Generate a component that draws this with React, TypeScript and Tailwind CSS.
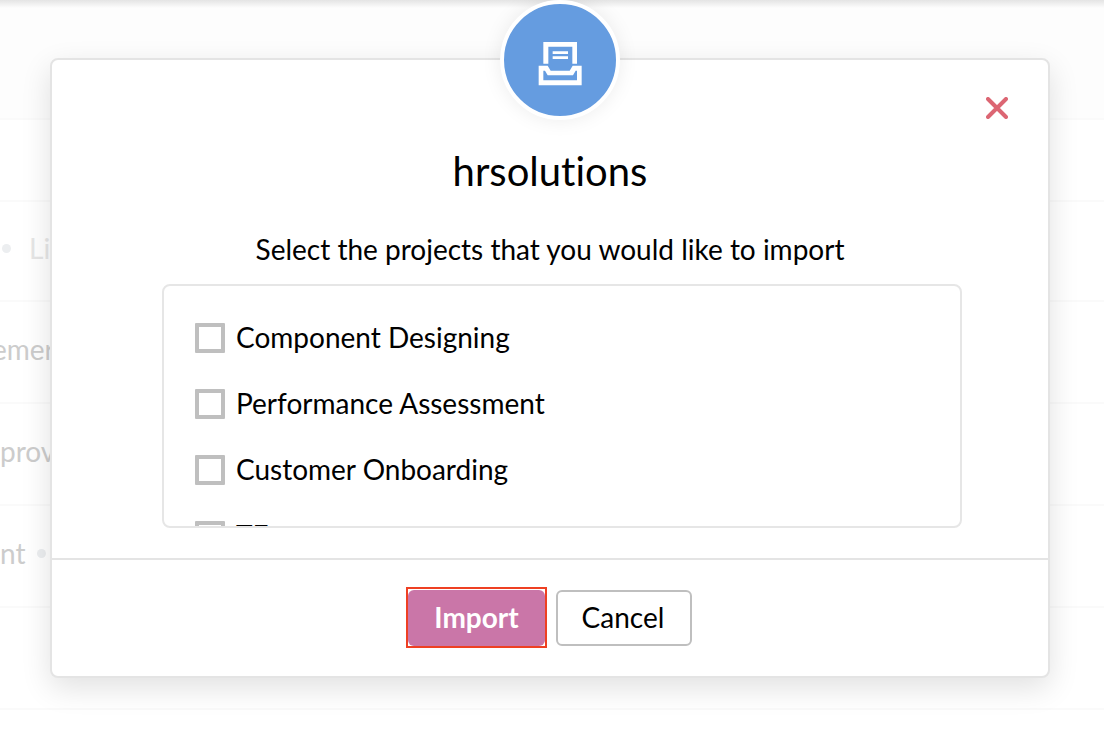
import type { ReactNode } from "react";

const projects = ["Component Designing", "Performance Assessment", "Customer Onboarding", "TE"];

function Row({ height, children }: { height: string; children?: ReactNode }) {
  return (
    <li className={`flex items-center border-b-2 border-[#fafafa] pb-1.5 whitespace-nowrap text-[#cccccc] ${height}`}>
      {children}
    </li>
  );
}

function Dot() {
  return <span className="size-[9px] shrink-0 rounded-full bg-[#eceef0]" />;
}

function ImportIcon() {
  return (
    <svg viewBox="144 124 132 135" className="mt-1.5 h-[45px] w-[44px]" fill="#fff" aria-hidden="true">
      <path d="M160 127H261V192H247V141H175V192H160Z" />
      <path d="M188 155H234V163H188ZM188 170H234V178H188Z" />
      <path
        fillRule="evenodd"
        d="M146 198H173L182 213H239L248 198H275V257H146ZM160 213V242H261V213H257L249 227H173L165 213Z"
      />
    </svg>
  );
}

export default function App() {
  return (
    <div className="relative min-h-screen overflow-hidden bg-white font-['Lato',sans-serif] text-[28px] leading-[34px] text-black [font-variant-ligatures:none]">
      <div className="h-2 bg-linear-to-b from-[#e4e4e4] to-[#fdfdfd]" />
      <ul>
        <Row height="h-28 bg-[#fdfdfd]" />
        <Row height="h-[82px]" />
        <Row height="h-[100px]">
          <span className="flex items-center gap-[18px] pl-0.5 text-[#e6e6e6]">
            <Dot />
            Li
          </span>
        </Row>
        <Row height="h-[102px]">
          <span className="-ml-2">emer</span>
        </Row>
        <Row height="h-[102px]">prov</Row>
        <Row height="h-[102px]">
          <span className="flex items-center gap-3">
            nt
            <Dot />
          </span>
        </Row>
        <Row height="h-[102px]" />
      </ul>

      <div className="absolute inset-x-0 top-0 pt-[58px] pr-[54px] pl-[50px]">
        <section
          role="dialog"
          aria-labelledby="dialog-title"
          className="relative rounded-lg border-2 border-[#e4e4e4] bg-white shadow-[0_10px_30px_rgba(0,0,0,0.12)]"
        >
          <div className="absolute -top-[60px] left-1/2 -ml-[50px] flex size-[120px] items-center justify-center rounded-full border-4 border-white bg-[#659ce0] shadow-[0_0_20px_rgba(0,0,0,0.08)]">
            <ImportIcon />
          </div>
          <button type="button" aria-label="Close" className="absolute top-[37px] right-10 text-[#dc6673]">
            <svg viewBox="0 0 22 22" className="size-[22px]" stroke="currentColor" strokeWidth="4" strokeLinecap="round" aria-hidden="true">
              <path d="M2 2L20 20M20 2L2 20" />
            </svg>
          </button>

          <div className="flex flex-col pt-[87px] pb-[30px]">
            <h1 id="dialog-title" className="text-center text-[40px] leading-[48px]">
              hrsolutions
            </h1>
            <p className="mt-[37px] text-center">Select the projects that you would like to import</p>
            <ul className="mt-[18px] mr-[86px] ml-[110px] flex h-[244px] flex-col gap-[30px] overflow-hidden rounded-lg border-2 border-[#e6e6e6] px-[31px] pt-[34px]">
              {projects.map((name) => (
                <li key={name} className="shrink-0">
                  <label className="flex items-center gap-[11px]">
                    <input type="checkbox" className="size-[30px] shrink-0 appearance-none rounded-[1px] border-4 border-[#bfbfbf] bg-white" />
                    <span className="pb-0.5">{name}</span>
                  </label>
                </li>
              ))}
            </ul>
          </div>

          <footer className="flex items-center justify-center gap-[9px] border-t-2 border-[#e4e4e4] pt-[27px] pr-0.5 pb-7">
            <div className="border-2 border-[#ee4023] pt-px">
              <button type="button" className="block h-14 w-[137px] rounded-md bg-[#ca76a8] pb-0.5 font-bold text-white">
                Import
              </button>
            </div>
            <button type="button" className="h-14 w-[136px] rounded-md border-2 border-[#bfbfbf] bg-white pr-0.5 pb-0.5">
              Cancel
            </button>
          </footer>
        </section>
      </div>
    </div>
  );
}
